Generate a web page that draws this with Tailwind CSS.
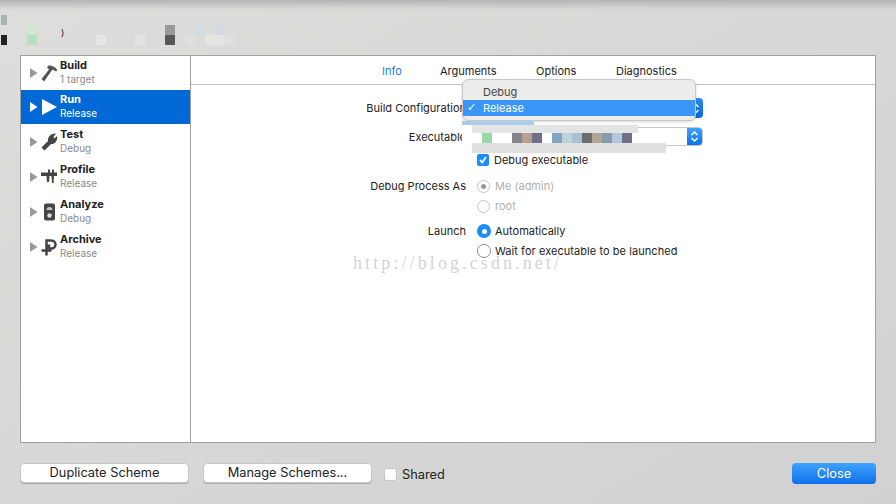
<!DOCTYPE html>
<html>
<head>
<meta charset="utf-8">
<script src="https://cdn.jsdelivr.net/npm/@tailwindcss/browser@4"></script>
</head>
<body class="m-0">
<div class="relative w-[896px] h-[504px] overflow-hidden flex flex-col bg-gradient-to-br from-[#dddedc] to-[#d1d1d1] font-['Inter','Liberation_Sans',sans-serif] text-[11px] text-[#222]">
  <!-- top blurred strip -->
  <div class="relative h-[55px] shrink-0">
    <div class="absolute left-0 top-0 w-full h-[10px] bg-gradient-to-b from-[#b4b4b4] to-transparent"></div>
    <div class="absolute left-[1px] top-[15px] w-[6px] h-[10px] bg-[#a6b5b5]"></div>
    <div class="absolute left-[1px] top-[35px] w-[6px] h-[10px] bg-[#222]"></div>
    <div class="absolute left-[27px] top-[25px] w-[10px] h-[10px] bg-[#cfe6d2]"></div>
    <div class="absolute left-[27px] top-[35px] w-[10px] h-[10px] bg-[#b6e0bd]"></div>
    <div class="absolute left-[61px] top-[28px] text-[9px] leading-[10px] text-[#111]">)</div>
    <div class="absolute left-[96px] top-[35px] w-[10px] h-[10px] bg-[#e6e6e4]"></div>
    <div class="absolute left-[135px] top-[35px] w-[10px] h-[10px] bg-[#e4e4e2]"></div>
    <div class="absolute left-[165px] top-[25px] w-[10px] h-[10px] bg-[#9a9a9a]"></div>
    <div class="absolute left-[165px] top-[35px] w-[10px] h-[10px] bg-[#585858]"></div>
    <div class="absolute left-[185px] top-[35px] w-[10px] h-[10px] bg-[#e0e0de]"></div>
    <div class="absolute left-[195px] top-[25px] w-[10px] h-[10px] bg-[#d3dbe3]"></div>
    <div class="absolute left-[215px] top-[25px] w-[10px] h-[10px] bg-[#d6d8e4]"></div>
    <div class="absolute left-[205px] top-[35px] w-[20px] h-[10px] bg-[#e4e4e2]"></div>
    <div class="absolute left-[225px] top-[35px] w-[10px] h-[10px] bg-[#e0e0de]"></div>
  </div>

  <!-- main panel -->
  <div class="mx-[20px] w-[856px] h-[388px] shrink-0 flex bg-white border border-[#a0a0a0]">
    <!-- sidebar -->
    <div class="w-[170px] shrink-0 border-r border-[#a0a0a0] flex flex-col">
      <div class="h-[34px] flex items-center pl-[9px]">
        <svg class="w-[10px] h-[12px] shrink-0" viewBox="0 0 10 12"><path d="M0 1l7.500 5L0 11z" fill="#999"/></svg>
        <svg class="w-[18px] h-[18px] ml-[1px] mb-[1px] shrink-0" viewBox="0 0 18 18"><path d="M.5 15L8 5.500 6 3.500 7.500 1.500C10.500 1 14 2.500 16.500 6L15 7.500 11.500 5.500 3 17.500z" fill="#555"/></svg>
        <div class="ml-[1px] mb-[2px] leading-[14px]"><div class="font-bold text-[#222]">Build</div><div class="text-[#8a8a8a] text-[10px]">1 target</div></div>
      </div>
      <div class="h-[34px] flex items-center pl-[9px] bg-[#0069d5] text-white">
        <svg class="w-[10px] h-[12px] shrink-0" viewBox="0 0 10 12"><path d="M0 1l7.500 5L0 11z" fill="#fff"/></svg>
        <svg class="w-[18px] h-[18px] ml-[1px] shrink-0" viewBox="0 0 18 18"><path d="M1 1l15 8L1 17z" fill="#fff"/></svg>
        <div class="ml-[1px] mb-[2px] leading-[14px]"><div class="font-bold">Run</div><div class="text-[10px]">Release</div></div>
      </div>
      <div class="h-[35px] flex items-center pl-[9px]">
        <svg class="w-[10px] h-[12px] shrink-0" viewBox="0 0 10 12"><path d="M0 1l7.500 5L0 11z" fill="#999"/></svg>
        <svg class="w-[18px] h-[18px] ml-[1px] shrink-0" viewBox="0 0 18 18"><path d="M.5 14.500L7 8C6.500 4 9.500 .5 15 .5L12.500 4l1 1.500L16 3c1 5-2.500 8.500-6 8L3.500 17.500z" fill="#444"/></svg>
        <div class="ml-[1px] mb-[2px] leading-[14px]"><div class="font-bold text-[#222]">Test</div><div class="text-[#8a8a8a] text-[10px]">Debug</div></div>
      </div>
      <div class="h-[35px] flex items-center pl-[9px]">
        <svg class="w-[10px] h-[12px] shrink-0" viewBox="0 0 10 12"><path d="M0 1l7.500 5L0 11z" fill="#999"/></svg>
        <svg class="w-[18px] h-[18px] ml-[1px] shrink-0" viewBox="0 0 18 18"><path d="M0 4.500h7V1.500h2v3h2V1.500h2v3h3V8h-3l-.5 7h-1.500L10.500 8h-2L8 14H6L5.500 8H0z" fill="#444"/></svg>
        <div class="ml-[1px] mb-[2px] leading-[14px]"><div class="font-bold text-[#222]">Profile</div><div class="text-[#8a8a8a] text-[10px]">Release</div></div>
      </div>
      <div class="h-[35px] flex items-center pl-[9px]">
        <svg class="w-[10px] h-[12px] shrink-0" viewBox="0 0 10 12"><path d="M0 1l7.500 5L0 11z" fill="#999"/></svg>
        <svg class="w-[18px] h-[18px] ml-[1px] shrink-0" viewBox="0 0 18 18"><rect x="3" y=".5" width="11" height="17" rx="2" fill="#444"/><path d="M5.500 7a3 3 0 0 1 6 0z" fill="#c4c4c4"/><circle cx="8.500" cy="12.500" r="2.200" fill="#ddd"/></svg>
        <div class="ml-[1px] mb-[2px] leading-[14px]"><div class="font-bold text-[#222]">Analyze</div><div class="text-[#8a8a8a] text-[10px]">Debug</div></div>
      </div>
      <div class="h-[35px] flex items-center pl-[9px]">
        <svg class="w-[10px] h-[12px] shrink-0" viewBox="0 0 10 12"><path d="M0 1l7.500 5L0 11z" fill="#999"/></svg>
        <svg class="w-[18px] h-[18px] ml-[1px] shrink-0" viewBox="0 0 18 18" fill="none" stroke="#444" stroke-width="2.500"><path d="M5.500 12V2.500h5a4 4 0 0 1 0 8H8V6.500"/><path d="M.5 12.500h10M5.500 12.500V17.500"/></svg>
        <div class="ml-[1px] mb-[2px] leading-[14px]"><div class="font-bold text-[#222]">Archive</div><div class="text-[#8a8a8a] text-[10px]">Release</div></div>
      </div>
    </div>

    <!-- right content -->
    <div class="flex-1 flex flex-col">
      <div class="h-[29px] shrink-0 border-b border-[#c0c0c0] relative">
        <div class="absolute left-[191px] top-[7px] text-[#1a82dc]">Info</div>
        <div class="absolute left-[249px] top-[7px]">Arguments</div>
        <div class="absolute left-[345px] top-[7px]">Options</div>
        <div class="absolute left-[425px] top-[7px]">Diagnostics</div>
      </div>
      <div class="grid grid-cols-[275px_1fr] gap-x-[11px] pt-[13px] text-[#222]">
        <div class="text-right h-[20px] leading-[20px]">Build Configuration</div>
        <div class="h-[20px]">
          <div class="w-[226px] h-[20px] rounded-[4px] bg-gradient-to-b from-[#2a8cf0] to-[#0a66dc] flex justify-end items-center pr-[3px]">
            <svg class="w-[9px] h-[13px]" viewBox="0 0 9 13" fill="none" stroke="#fff" stroke-width="1.500"><path d="M1.500 5L4.500 2l3 3M1.500 8l3 3 3-3"/></svg>
          </div>
        </div>
        <div class="text-right h-[20px] mt-[9px] leading-[20px]">Executable</div>
        <div class="h-[20px] mt-[9px] flex">
          <div class="w-[226px] h-[19px] rounded-[4px] bg-white border border-[#c8c8c8] flex justify-end">
            <div class="w-[15px] h-[17px] rounded-r-[3px] bg-gradient-to-b from-[#3fa2fb] to-[#0a70ea] flex items-center justify-center">
              <svg class="w-[9px] h-[13px]" viewBox="0 0 9 13" fill="none" stroke="#fff" stroke-width="1.500"><path d="M1.500 5L4.500 2l3 3M1.500 8l3 3 3-3"/></svg>
            </div>
          </div>
        </div>
        <div class="h-[20px] mt-[3px]"></div>
        <div class="h-[20px] mt-[3px] flex items-center gap-[5px]">
          <div class="w-[12px] h-[12px] rounded-[2px] bg-[#1a8cfb] flex items-center justify-center"><svg class="w-[10px] h-[10px]" viewBox="0 0 10 10" fill="none" stroke="#fff" stroke-width="1.800"><path d="M2 5l2.200 2.500L8 2"/></svg></div>
          <span>Debug executable</span>
        </div>
        <div class="text-right h-[20px] mt-[6px] leading-[20px]">Debug Process As</div>
        <div class="h-[20px] mt-[6px] flex items-center gap-[5px] text-[#b0b0b0]">
          <div class="w-[13px] h-[13px] rounded-full border border-[#c4c4c4] flex items-center justify-center"><div class="w-[5px] h-[5px] rounded-full bg-[#9a9a9a]"></div></div>
          <span>Me (admin)</span>
        </div>
        <div class="h-[20px]"></div>
        <div class="h-[20px] flex items-center gap-[5px] text-[#b0b0b0]">
          <div class="w-[13px] h-[13px] rounded-full border border-[#c4c4c4]"></div>
          <span>root</span>
        </div>
        <div class="text-right h-[20px] mt-[5px] leading-[20px]">Launch</div>
        <div class="h-[20px] mt-[5px] flex items-center gap-[4px]">
          <div class="w-[14px] h-[14px] rounded-full bg-[#1a8cfb] flex items-center justify-center"><div class="w-[5px] h-[5px] rounded-full bg-white"></div></div>
          <span>Automatically</span>
        </div>
        <div class="h-[20px]"></div>
        <div class="h-[20px] flex items-center gap-[4px]">
          <div class="w-[14px] h-[14px] rounded-full border border-[#8e8e8e] bg-white"></div>
          <span class="tracking-[0.06px]">Wait for executable to be launched</span>
        </div>
      </div>
    </div>
  </div>

  <!-- bottom bar -->
  <div class="flex-1 flex items-start pt-[20px] pl-[20px] pr-[20px] text-[12.8px] text-[#222]">
    <div class="w-[169px] h-[20px] rounded-[4px] bg-white border border-[#c6c6c6] flex items-center justify-center shadow-[0_1px_0_#aaa]">Duplicate Scheme</div>
    <div class="ml-[14px] w-[169px] h-[20px] rounded-[4px] bg-white border border-[#c6c6c6] flex items-center justify-center shadow-[0_1px_0_#aaa]">Manage Schemes...</div>
    <div class="ml-[12px] w-[13px] h-[13px] mt-[5px] rounded-[3px] bg-white border border-[#c6c6c6]"></div>
    <span class="ml-[5px] mt-[2px]">Shared</span>
    <div class="ml-auto w-[84px] h-[21px] rounded-[4px] bg-gradient-to-b from-[#3fa2fb] to-[#0a70ea] text-white flex items-center justify-center">Close</div>
  </div>

  <!-- popup menu -->
  <div class="absolute left-[462px] top-[79px] w-[234px] h-[42px] rounded-[6px] bg-[#ececeb] border border-[#c8c8c8] pt-[4px] shadow-[0_1px_3px_rgba(0,0,0,0.15)] text-[11px]">
    <div class="h-[16px] leading-[16px] pl-[20px] text-[#444]">Debug</div>
    <div class="h-[16px] leading-[16px] bg-[#3a96f7] text-white flex"><span class="w-[20px] pl-[4px] font-bold font-['DejaVu_Sans',sans-serif]">✓</span>Release</div>
  </div>

  <!-- redaction smears -->
  <div class="absolute left-[462px] top-[121px] w-[72px] h-[4px] bg-[#a9cdee]"></div>
  <div class="absolute left-[462px] top-[125px] w-[20px] h-[20px] bg-white"></div>
  <div class="absolute left-[472px] top-[125px] w-[166px] h-[8px] bg-[#e4e4e4]"></div>
  <div class="absolute left-[482px] top-[133px] w-[10px] h-[10px] bg-[#9ad8a8]"></div>
  <div class="absolute left-[512px] top-[133px] w-[10px] h-[10px] bg-[#84848c]"></div>
  <div class="absolute left-[522px] top-[133px] w-[10px] h-[10px] bg-[#b89f92]"></div>
  <div class="absolute left-[532px] top-[133px] w-[10px] h-[10px] bg-[#6f6f85]"></div>
  <div class="absolute left-[552px] top-[133px] w-[10px] h-[10px] bg-[#83a5c2]"></div>
  <div class="absolute left-[562px] top-[133px] w-[10px] h-[10px] bg-[#bcd2da]"></div>
  <div class="absolute left-[572px] top-[133px] w-[10px] h-[10px] bg-[#a8c0d4]"></div>
  <div class="absolute left-[582px] top-[133px] w-[10px] h-[10px] bg-[#6c6e6e]"></div>
  <div class="absolute left-[592px] top-[133px] w-[10px] h-[10px] bg-[#b5a394]"></div>
  <div class="absolute left-[602px] top-[133px] w-[10px] h-[10px] bg-[#869caa]"></div>
  <div class="absolute left-[612px] top-[133px] w-[10px] h-[10px] bg-[#b3c6de]"></div>
  <div class="absolute left-[622px] top-[133px] w-[10px] h-[10px] bg-[#6f7088]"></div>
  <div class="absolute left-[472px] top-[143px] w-[194px] h-[10px] bg-[#e0e0e0]"></div>

  <!-- watermark -->
  <div class="absolute left-[353px] top-[253px] font-['Liberation_Serif',serif] text-[18px] leading-[20px] tracking-[3.1px] text-[#c8c8c8]/80">http://blog.csdn.net/</div>
</div>
</body>
</html>
